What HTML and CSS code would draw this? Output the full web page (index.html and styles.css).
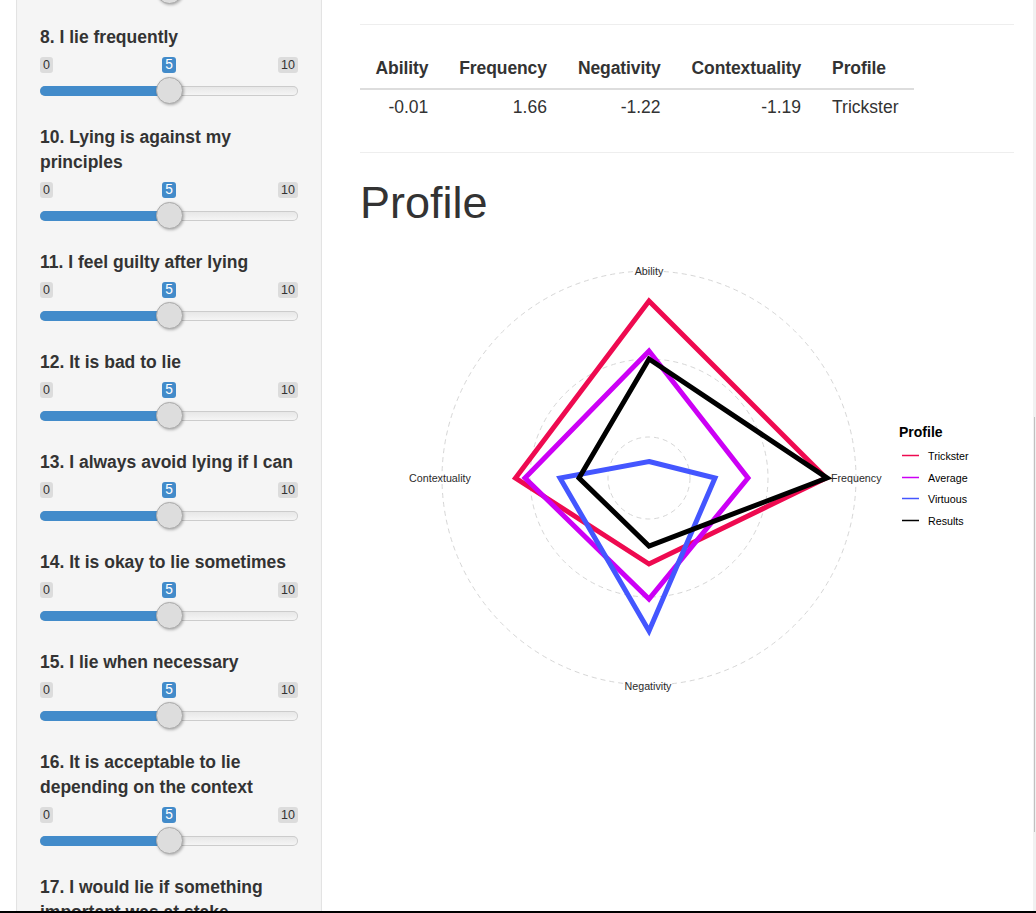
FILE: index.html
```html
<!DOCTYPE html>
<html lang="en">
<head>
<meta charset="utf-8">
<title>Lying Profile</title>
<link rel="stylesheet" href="styles.css">
</head>
<body>
<div class="page">
  <aside class="sidebar">
    <div class="well">
      <div class="slider slider-partial">
        <div class="irs-track"><div class="irs-bar"></div><div class="irs-handle"></div></div>
      </div>

      <div class="form-group">
        <label class="control-label">8. I lie frequently</label>
        <div class="slider">
          <div class="irs-labels"><span class="irs-min">0</span><span class="irs-single">5</span><span class="irs-max">10</span></div>
          <div class="irs-track"><div class="irs-bar"></div><div class="irs-handle"></div></div>
        </div>
      </div>

      <div class="form-group">
        <label class="control-label">10. Lying is against my principles</label>
        <div class="slider">
          <div class="irs-labels"><span class="irs-min">0</span><span class="irs-single">5</span><span class="irs-max">10</span></div>
          <div class="irs-track"><div class="irs-bar"></div><div class="irs-handle"></div></div>
        </div>
      </div>

      <div class="form-group">
        <label class="control-label">11. I feel guilty after lying</label>
        <div class="slider">
          <div class="irs-labels"><span class="irs-min">0</span><span class="irs-single">5</span><span class="irs-max">10</span></div>
          <div class="irs-track"><div class="irs-bar"></div><div class="irs-handle"></div></div>
        </div>
      </div>

      <div class="form-group">
        <label class="control-label">12. It is bad to lie</label>
        <div class="slider">
          <div class="irs-labels"><span class="irs-min">0</span><span class="irs-single">5</span><span class="irs-max">10</span></div>
          <div class="irs-track"><div class="irs-bar"></div><div class="irs-handle"></div></div>
        </div>
      </div>

      <div class="form-group">
        <label class="control-label">13. I always avoid lying if I can</label>
        <div class="slider">
          <div class="irs-labels"><span class="irs-min">0</span><span class="irs-single">5</span><span class="irs-max">10</span></div>
          <div class="irs-track"><div class="irs-bar"></div><div class="irs-handle"></div></div>
        </div>
      </div>

      <div class="form-group">
        <label class="control-label">14. It is okay to lie sometimes</label>
        <div class="slider">
          <div class="irs-labels"><span class="irs-min">0</span><span class="irs-single">5</span><span class="irs-max">10</span></div>
          <div class="irs-track"><div class="irs-bar"></div><div class="irs-handle"></div></div>
        </div>
      </div>

      <div class="form-group">
        <label class="control-label">15. I lie when necessary</label>
        <div class="slider">
          <div class="irs-labels"><span class="irs-min">0</span><span class="irs-single">5</span><span class="irs-max">10</span></div>
          <div class="irs-track"><div class="irs-bar"></div><div class="irs-handle"></div></div>
        </div>
      </div>

      <div class="form-group">
        <label class="control-label">16. It is acceptable to lie depending on the context</label>
        <div class="slider">
          <div class="irs-labels"><span class="irs-min">0</span><span class="irs-single">5</span><span class="irs-max">10</span></div>
          <div class="irs-track"><div class="irs-bar"></div><div class="irs-handle"></div></div>
        </div>
      </div>

      <div class="form-group">
        <label class="control-label">17. I would lie if something important was at stake</label>
        <div class="slider">
          <div class="irs-labels"><span class="irs-min">0</span><span class="irs-single">5</span><span class="irs-max">10</span></div>
          <div class="irs-track"><div class="irs-bar"></div><div class="irs-handle"></div></div>
        </div>
      </div>
    </div>
  </aside>

  <main class="main">
    <hr class="rule rule-first">
    <table class="results">
      <thead>
        <tr><th class="num">Ability</th><th class="num">Frequency</th><th class="num">Negativity</th><th class="num">Contextuality</th><th>Profile</th></tr>
      </thead>
      <tbody>
        <tr><td class="num">-0.01</td><td class="num">1.66</td><td class="num">-1.22</td><td class="num">-1.19</td><td>Trickster</td></tr>
      </tbody>
    </table>
    <hr class="rule">
    <h1 class="title">Profile</h1>
    <svg class="radar" width="653" height="470" viewBox="360 239 653 470" xmlns="http://www.w3.org/2000/svg">
      <g fill="none" stroke="#d6d6d6" stroke-width="1" stroke-dasharray="5 4">
        <circle cx="649" cy="477" r="41"/>
        <circle cx="649" cy="477" r="119"/>
        <circle cx="649" cy="477" r="207"/>
      </g>
      <g class="axis-label" font-size="10.7" fill="#2b2b2b">
        <text x="649" y="273.5" text-anchor="middle">Ability</text>
        <text x="440" y="481" text-anchor="middle">Contextuality</text>
        <text x="831" y="481" text-anchor="start">Frequency</text>
        <text x="648" y="688.5" text-anchor="middle">Negativity</text>
      </g>
      <g fill="none" stroke-width="5" stroke-linejoin="miter" stroke-miterlimit="10">
        <polygon points="649,300 826,477 649,563 515.5,477" stroke="#ee0a50"/>
        <polygon points="649,350 748,477 649,598 525,477" stroke="#cc00f5"/>
        <polygon points="649,460.5 715,477 649,630 560,477" stroke="#4456ff"/>
        <polygon points="649,358 827,477 649,545 579,477" stroke="#000000"/>
      </g>
      <g class="legend">
        <text x="899" y="436" font-size="14" font-weight="bold" fill="#000">Profile</text>
        <line x1="902" y1="454.5" x2="919" y2="454.5" stroke="#ee0a50" stroke-width="1.5"/>
        <text x="928" y="458.5" font-size="10.7" fill="#000">Trickster</text>
        <line x1="902" y1="476.5" x2="919" y2="476.5" stroke="#cc00f5" stroke-width="1.5"/>
        <text x="928" y="480.5" font-size="10.7" fill="#000">Average</text>
        <line x1="902" y1="497.5" x2="919" y2="497.5" stroke="#4456ff" stroke-width="1.5"/>
        <text x="928" y="501.5" font-size="10.7" fill="#000">Virtuous</text>
        <line x1="902" y1="519.5" x2="919" y2="519.5" stroke="#000000" stroke-width="1.5"/>
        <text x="928" y="523.5" font-size="10.7" fill="#000">Results</text>
      </g>
    </svg>
  </main>
</div>
<div class="vscroll"><div class="vscroll-thumb"></div></div>
<div class="hscroll"></div>
</body>
</html>
```

FILE: styles.css
```css
html, body {
  margin: 0;
  padding: 0;
  height: 100%;
  overflow: hidden;
  background: #ffffff;
}

body {
  font-family: "Liberation Sans", Arial, Helvetica, sans-serif;
  font-size: 17.5px;
  line-height: 25px;
  color: #333333;
}

.page {
  display: flex;
  align-items: flex-start;
  padding-left: 16px;
  gap: 38px;
}

/* ---------- sidebar ---------- */
.sidebar {
  width: 306px;
  flex: none;
}

.well {
  margin-top: -68.5px;
  padding: 23px;
  background: #f5f5f5;
  border: 1px solid #e3e3e3;
  border-radius: 5px;
  box-shadow: inset 0 1px 1px rgba(0, 0, 0, 0.05);
}

.form-group {
  margin-top: 13px;
}

.control-label {
  display: block;
  font-weight: bold;
  margin-bottom: 6px;
  line-height: 25px;
}

.slider {
  height: 56px;
  padding-top: 1px;
  box-sizing: border-box;
}

.slider-partial {
  padding-top: 30px;
}

.slider-partial .irs-track {
  margin-top: 0;
}

.irs-labels {
  display: grid;
  grid-template-columns: 1fr auto 1fr;
  height: 16px;
  font-size: 12.5px;
  line-height: 14px;
}

.irs-min,
.irs-max,
.irs-single {
  padding: 1px 3px;
  border-radius: 3px;
}

.irs-min {
  justify-self: start;
  background: rgba(0, 0, 0, 0.1);
  color: #333333;
}

.irs-max {
  justify-self: end;
  background: rgba(0, 0, 0, 0.1);
  color: #333333;
}

.irs-single {
  justify-self: center;
  background: #428bca;
  color: #ffffff;
  font-size: 13.75px;
  padding: 1px 3.5px;
}

.irs-track {
  position: relative;
  margin-top: 13px;
  height: 10px;
  border-radius: 5px;
  background: linear-gradient(to bottom, #dddddd -50%, #ffffff 150%);
  box-shadow: inset 0 0 0 1px #cccccc;
}

.irs-bar {
  width: 50%;
  height: 100%;
  background: #428bca;
  border-radius: 5px 0 0 5px;
}

.irs-handle {
  position: absolute;
  left: 50%;
  top: 50%;
  width: 25px;
  height: 25px;
  margin-left: -13.5px;
  margin-top: -13.5px;
  border: 1px solid #aaaaaa;
  border-radius: 50%;
  background: #dddddd;
  box-shadow: 1px 1px 3px rgba(0, 0, 0, 0.3);
}

/* ---------- main ---------- */
.main {
  width: 654px;
  flex: none;
  padding-top: 24px;
}

.rule {
  margin: 25px 0;
  border: 0;
  border-top: 1px solid #eeeeee;
  height: 0;
}

.rule-first {
  margin-top: 0;
}

.results {
  border-collapse: collapse;
  margin-bottom: 25px;
}

.results th,
.results td {
  padding: 6px 15.5px 6.5px;
  line-height: 25px;
  text-align: left;
  white-space: nowrap;
}

.results th {
  font-weight: bold;
  letter-spacing: -0.1px;
  border-bottom: 2px solid #dddddd;
}

.results td {
  padding-top: 5.5px;
  padding-bottom: 7px;
}

.results .num {
  text-align: right;
}

.title {
  margin: 25px 0 12.5px;
  font-size: 45px;
  line-height: 1.1;
  font-weight: normal;
  color: #333333;
}

.radar {
  display: block;
  font-family: "Liberation Sans", Arial, Helvetica, sans-serif;
}

/* ---------- window chrome ---------- */
.vscroll {
  position: fixed;
  top: 0;
  right: 0;
  bottom: 2px;
  width: 3px;
  background: #f1f1f1;
}

.vscroll-thumb {
  position: absolute;
  top: 417px;
  right: 1px;
  width: 1px;
  height: 415px;
  background: #c1c1c1;
}

.hscroll {
  position: fixed;
  left: 0;
  right: 0;
  bottom: 0;
  height: 2px;
  background: #000000;
}
```
